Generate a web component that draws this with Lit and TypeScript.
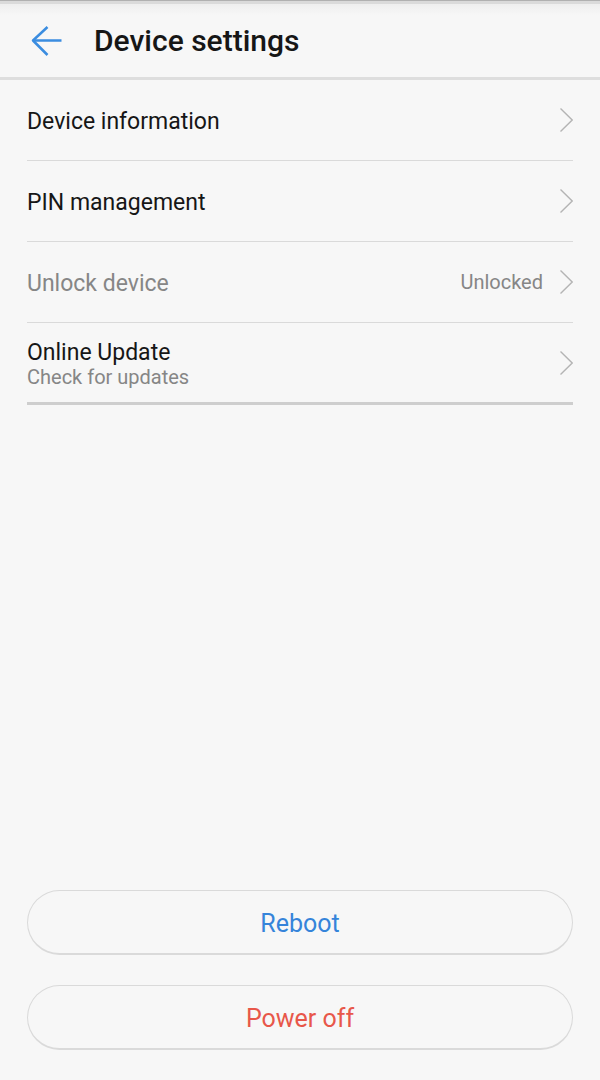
import { LitElement, html, css } from 'lit';
import { customElement, property } from 'lit/decorators.js';

@customElement('settings-row')
export class SettingsRow extends LitElement {
  static styles = css`
    :host {
      display: block;
    }

    .row {
      display: flex;
      align-items: center;
      gap: 16px;
      box-sizing: border-box;
      width: 100%;
      min-height: 81px;
      padding: 0;
      border: 0;
      border-bottom: 1px solid #dadada;
      background: none;
      color: #161616;
      font-family: Roboto, sans-serif;
      font-size: 23px;
      line-height: 28px;
      text-align: left;
      cursor: pointer;
    }

    .row:disabled {
      color: #868686;
      cursor: default;
    }

    .last {
      min-height: 82px;
      border-bottom: 3px solid #cecece;
    }

    .text {
      display: flex;
      flex: 1;
      flex-direction: column;
    }

    .single {
      padding-top: 4px;
    }

    .hint,
    .value {
      color: #868686;
      font-size: 20px;
      line-height: 20px;
    }

    .chevron {
      width: 14px;
      height: 24px;
      fill: none;
      stroke: #b4b4b4;
      stroke-width: 1.4;
    }
  `;

  @property() label = '';
  @property() hint = '';
  @property() value = '';
  @property({ type: Boolean }) disabled = false;
  @property({ type: Boolean }) last = false;

  render() {
    return html`
      <button class="row ${this.last ? 'last' : ''}" ?disabled=${this.disabled}>
        <span class="text ${this.hint ? '' : 'single'}">
          <span>${this.label}</span>
          ${this.hint ? html`<span class="hint">${this.hint}</span>` : ''}
        </span>
        ${this.value ? html`<span class="value">${this.value}</span>` : ''}
        <svg class="chevron" viewBox="0 0 14 24" aria-hidden="true">
          <path d="M1.5 0.5 L13.2 12 L1.5 23.5" />
        </svg>
      </button>
    `;
  }
}

@customElement('app-root')
export class AppRoot extends LitElement {
  static styles = css`
    :host {
      display: flex;
      flex-direction: column;
      box-sizing: border-box;
      min-height: 100vh;
      background: #f7f7f7;
      font-family: Roboto, sans-serif;
    }

    .header {
      display: flex;
      align-items: center;
      gap: 32px;
      box-sizing: border-box;
      min-height: 80px;
      padding: 4px 30px 0;
      border-top: 1px solid #b0b0b0;
      border-bottom: 3px solid #dedede;
      background: linear-gradient(#dadada 3px, #eeeeee 3px, #f7f7f7 14px);
    }

    .back {
      display: flex;
      padding: 0;
      border: 0;
      background: none;
      cursor: pointer;
    }

    .arrow {
      width: 32px;
      height: 32px;
      fill: none;
      stroke: #3b8de0;
      stroke-width: 2.5;
    }

    .title {
      margin: 0;
      color: #161616;
      font-size: 30px;
      font-weight: 500;
      line-height: 36px;
    }

    .list {
      flex: 1;
      padding: 0 27px;
    }

    .actions {
      display: flex;
      flex-direction: column;
      gap: 30px;
      padding: 30px 27px;
    }

    .action {
      height: 65px;
      padding: 4px 0 0;
      border: 1px solid #dadada;
      border-bottom-width: 2px;
      border-radius: 33px;
      background: none;
      color: #3584da;
      font-family: inherit;
      font-size: 25px;
      line-height: 30px;
      cursor: pointer;
    }

    .danger {
      color: #e8574a;
    }
  `;

  render() {
    return html`
      <header class="header">
        <button class="back" aria-label="Back">
          <svg class="arrow" viewBox="0 0 32 32" aria-hidden="true">
            <path d="M17.5 2 L3 15.5 L17.5 30" stroke-linejoin="round" />
            <path d="M3 15.5 H31.5" />
          </svg>
        </button>
        <h1 class="title">Device settings</h1>
      </header>
      <main class="list">
        <settings-row label="Device information"></settings-row>
        <settings-row label="PIN management"></settings-row>
        <settings-row label="Unlock device" value="Unlocked" disabled></settings-row>
        <settings-row label="Online Update" hint="Check for updates" last></settings-row>
      </main>
      <footer class="actions">
        <button class="action">Reboot</button>
        <button class="action danger">Power off</button>
      </footer>
    `;
  }
}
